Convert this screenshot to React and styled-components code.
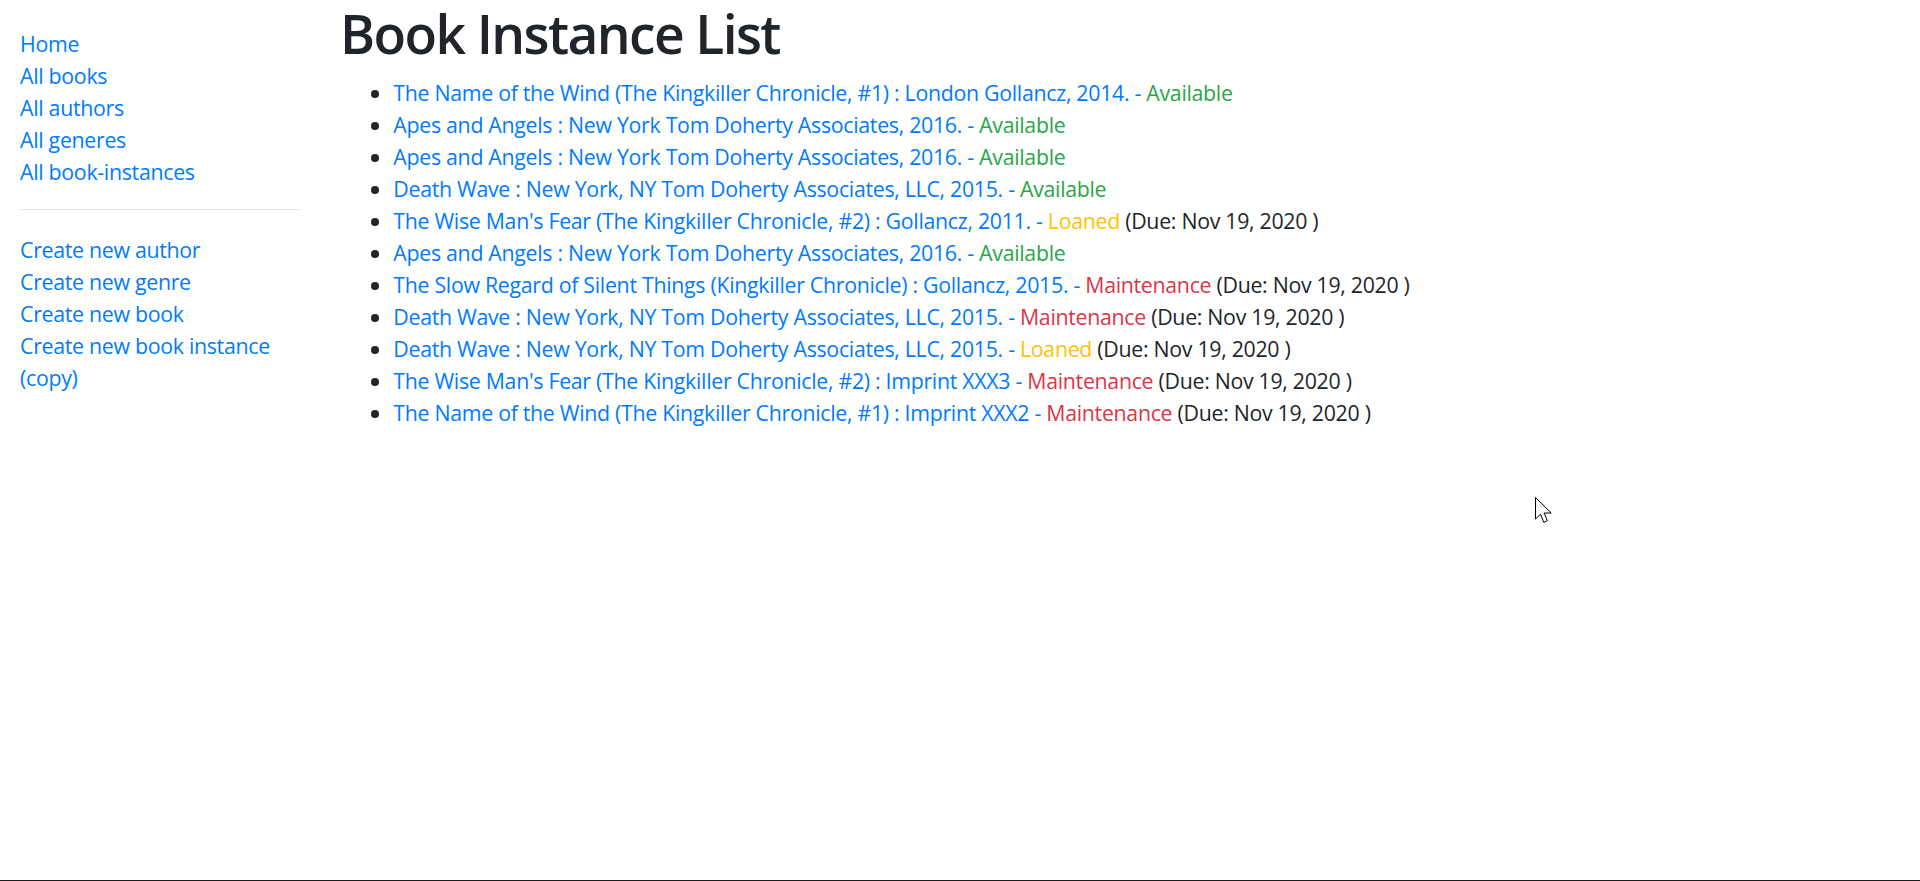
import styled, { createGlobalStyle } from "styled-components";

const GlobalStyle = createGlobalStyle`
  html, body {
    margin: 0;
    padding: 0;
    background: #fff;
  }
  body {
    font-family: "Open Sans", "Noto Sans", sans-serif;
    font-size: 21.33px;
    line-height: 32px;
    color: #212529;
    letter-spacing: -0.3px;
  }
`;

const Page = styled.div`
  height: 881px;
  display: flex;
  flex-direction: column;
  position: relative;
  overflow: hidden;
`;

const Row = styled.div`
  flex: 1;
  display: grid;
  grid-template-columns: 320px 1fr;
  padding-top: 1px;
`;

const Sidebar = styled.div`
  padding: 0 20px;
`;

const NavList = styled.ul`
  list-style: none;
  padding: 0;
  margin: ${(p) => (p.$first ? "26.67px" : "24px")} 0 21.33px;
`;

const Divider = styled.hr`
  border: 0;
  border-top: 1px solid rgba(0, 0, 0, 0.1);
  margin: 0;
`;

const Link = styled.a`
  color: #007bff;
  text-decoration: none;
  cursor: pointer;
`;

const Content = styled.div`
  padding: 0 20px;
`;

const Title = styled.h1`
  margin: 1px 0 10.67px;
  font-size: 53.33px;
  line-height: 64px;
  font-weight: 600;
  letter-spacing: -1.6px;
  color: #212529;
`;

const InstanceList = styled.ul`
  margin: 0;
  padding-left: 53.33px;
`;

const statusColors = {
  Available: "#28a745",
  Loaned: "#ffc107",
  Maintenance: "#dc3545",
};

const Status = styled.span`
  color: ${(p) => statusColors[p.$status]};
`;

const BottomEdge = styled.div`
  height: 1px;
  background: #1c1c1c;
`;

const Pointer = styled.svg`
  position: absolute;
  left: 1535px;
  top: 497px;
`;

const navTop = ["Home", "All books", "All authors", "All generes", "All book-instances"];
const navCreate = [
  "Create new author",
  "Create new genre",
  "Create new book",
  "Create new book instance (copy)",
];

const due = "Nov 19, 2020";
const instances = [
  ["The Name of the Wind (The Kingkiller Chronicle, #1)", "London Gollancz, 2014.", "Available"],
  ["Apes and Angels", "New York Tom Doherty Associates, 2016.", "Available"],
  ["Apes and Angels", "New York Tom Doherty Associates, 2016.", "Available"],
  ["Death Wave", "New York, NY Tom Doherty Associates, LLC, 2015.", "Available"],
  ["The Wise Man's Fear (The Kingkiller Chronicle, #2)", "Gollancz, 2011.", "Loaned"],
  ["Apes and Angels", "New York Tom Doherty Associates, 2016.", "Available"],
  ["The Slow Regard of Silent Things (Kingkiller Chronicle)", "Gollancz, 2015.", "Maintenance"],
  ["Death Wave", "New York, NY Tom Doherty Associates, LLC, 2015.", "Maintenance"],
  ["Death Wave", "New York, NY Tom Doherty Associates, LLC, 2015.", "Loaned"],
  ["The Wise Man's Fear (The Kingkiller Chronicle, #2)", "Imprint XXX3", "Maintenance"],
  ["The Name of the Wind (The Kingkiller Chronicle, #1)", "Imprint XXX2", "Maintenance"],
];

function App() {
  return (
    <Page>
      <GlobalStyle />
      <Row>
        <Sidebar>
          <NavList $first>
            {navTop.map((item) => (
              <li key={item}>
                <Link>{item}</Link>
              </li>
            ))}
          </NavList>
          <Divider />
          <NavList>
            {navCreate.map((item) => (
              <li key={item}>
                <Link>{item}</Link>
              </li>
            ))}
          </NavList>
        </Sidebar>
        <Content>
          <Title>Book Instance List</Title>
          <InstanceList>
            {instances.map(([title, imprint, status], i) => (
              <li key={i}>
                <Link>
                  {title} : {imprint} -{" "}
                </Link>
                <Status $status={status}>{status}</Status>
                {status !== "Available" && <span> (Due: {due} )</span>}
              </li>
            ))}
          </InstanceList>
        </Content>
      </Row>
      <BottomEdge />
      <Pointer width="19" height="28" viewBox="0 0 19 28">
        <path
          d="M0.5 0.5 L0.5 22 L5.5 17.3 L8.8 25.3 L12.4 23.8 L9.2 16 L16.2 16 Z"
          fill="#fff"
          stroke="#000"
          strokeWidth="1"
          strokeLinejoin="miter"
        />
      </Pointer>
    </Page>
  );
}

export default App;
